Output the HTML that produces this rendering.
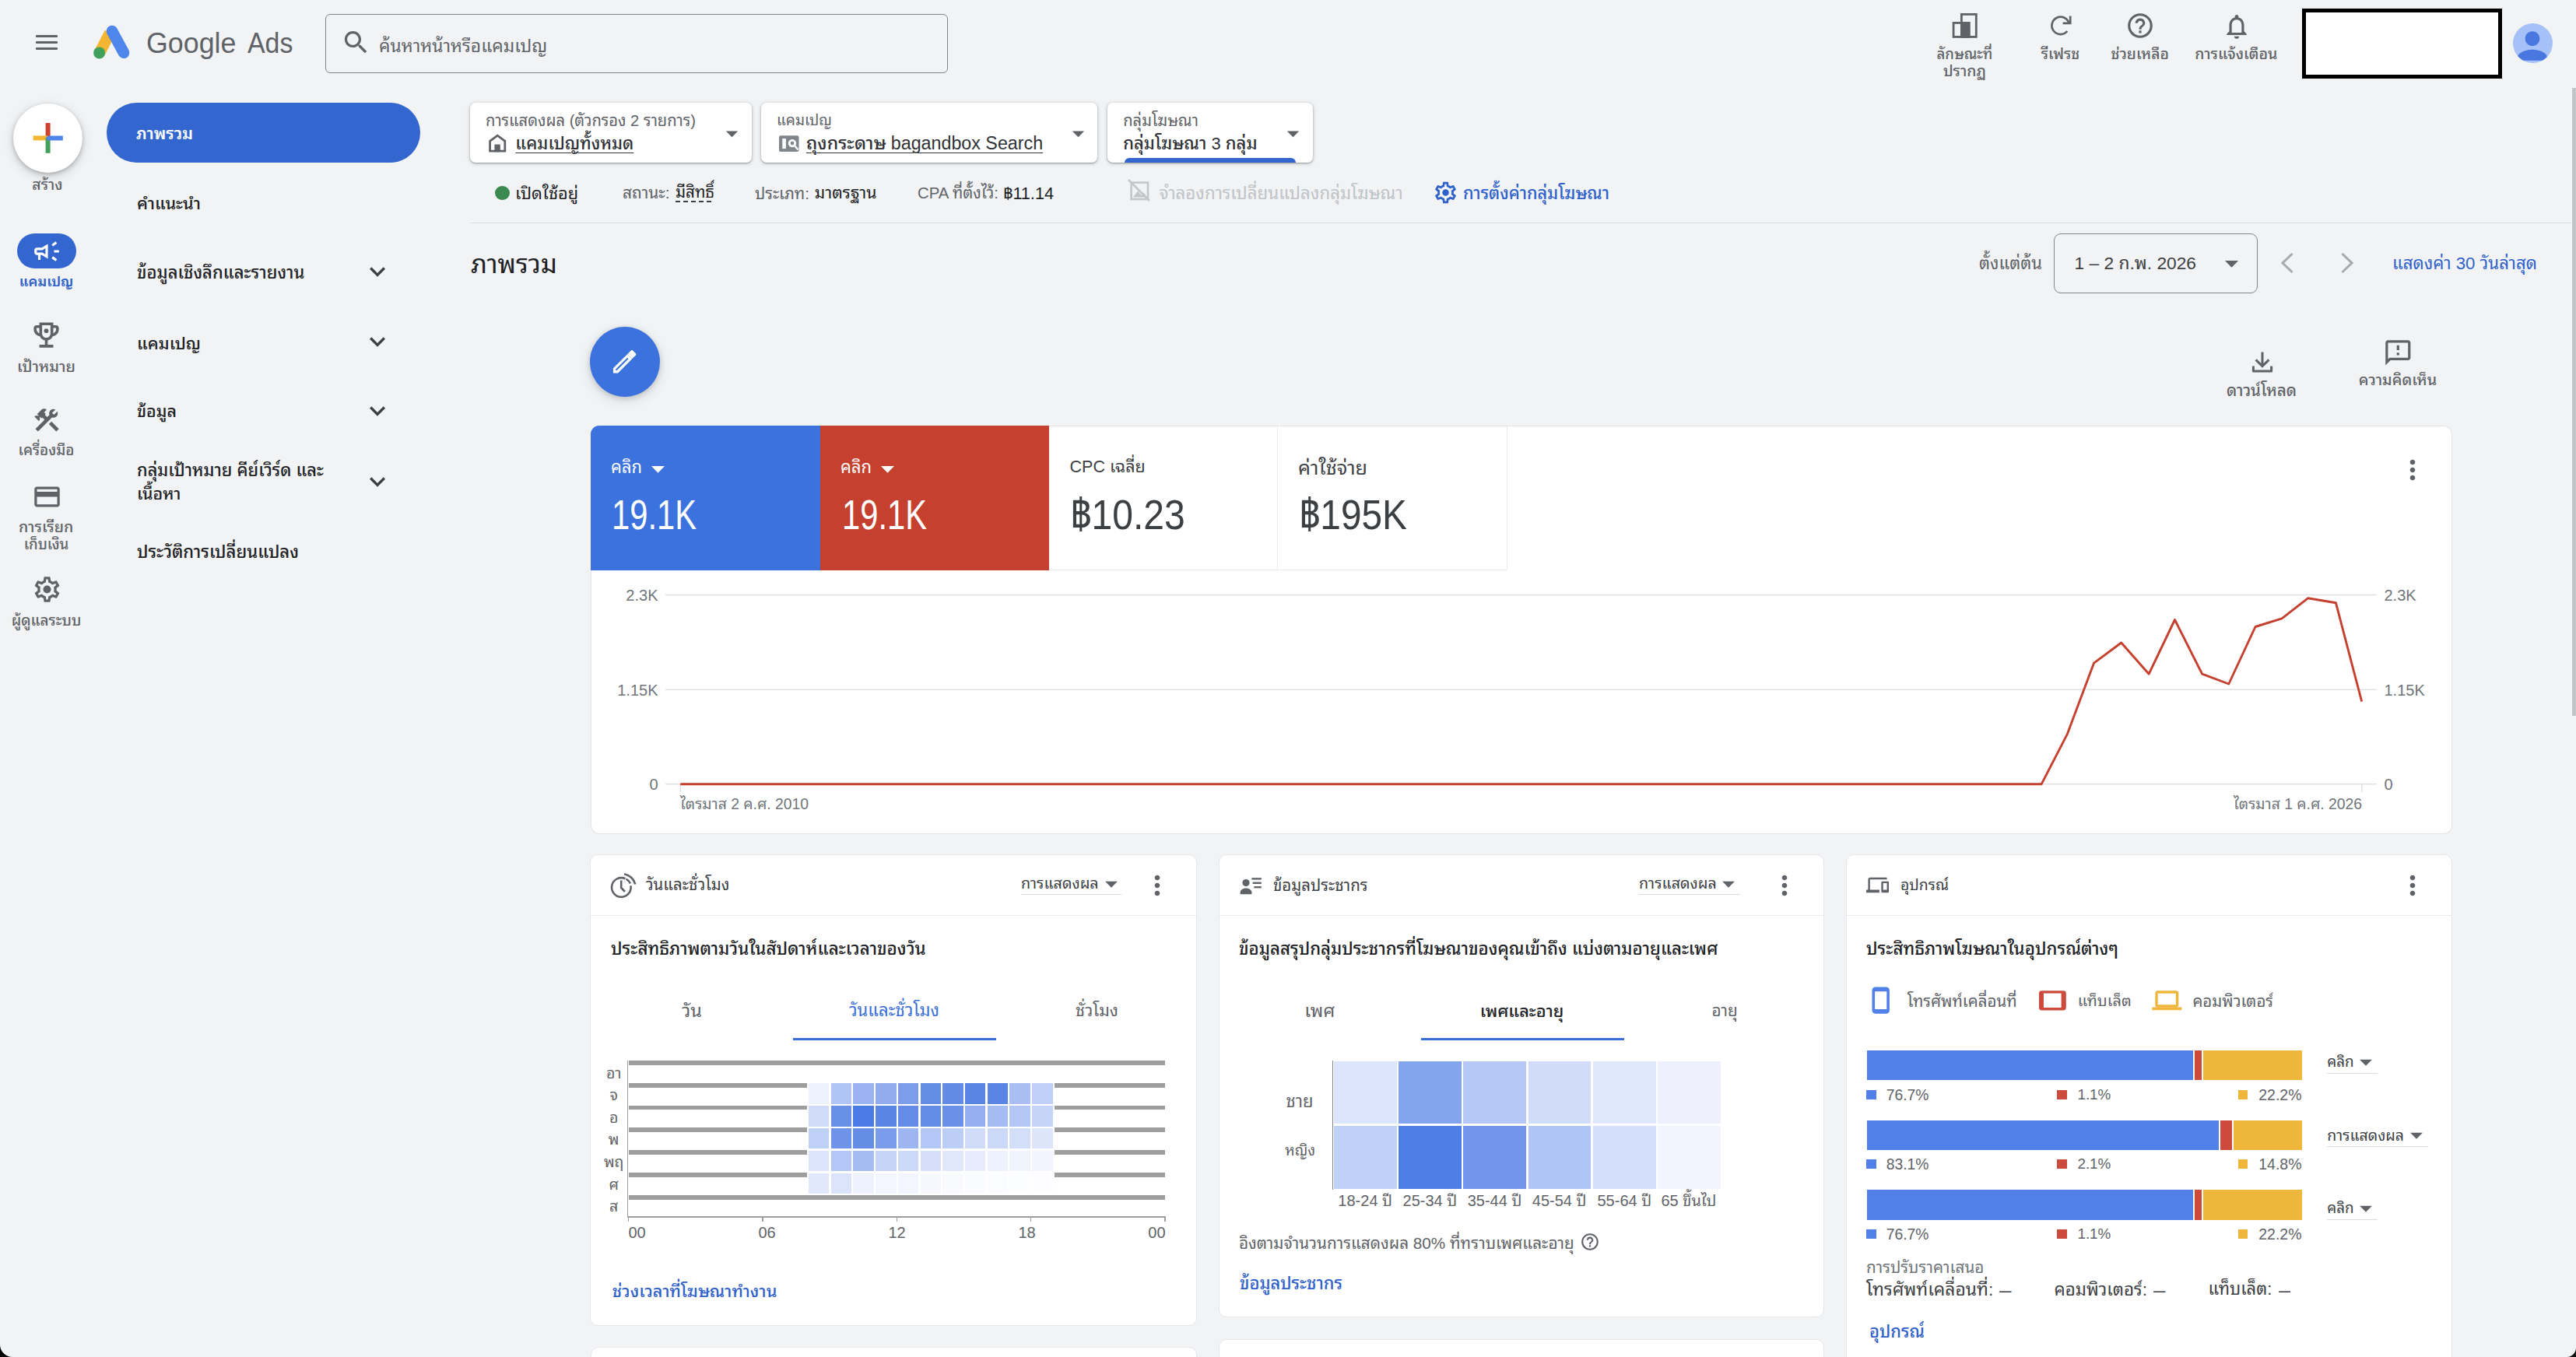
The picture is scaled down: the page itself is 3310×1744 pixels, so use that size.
<!DOCTYPE html>
<html lang="th"><head><meta charset="utf-8"><title>Google Ads</title>
<style>
html,body{margin:0;padding:0;background:#f1f3f5;}
#app{position:relative;width:3310px;height:1744px;overflow:hidden;background:#f1f3f5;font-family:"Liberation Sans","Noto Sans Thai Looped","Noto Sans Thai",sans-serif;}
#app div,#app svg{position:absolute;box-sizing:border-box;}
#app svg{overflow:visible;}
.t{white-space:nowrap;}
.c{background:#fff;border:1px solid #e5e7ea;border-radius:10px;}
.fc{background:#fff;border-radius:7px;box-shadow:0 1px 2px rgba(60,64,67,.4),0 1px 4px 1px rgba(60,64,67,.17);}
</style></head>
<body>
<div id="app">
<div style="left:45.7px;top:45.05px;width:28.4px;height:3.1px;background:#5f6368;border-radius:1px;"></div>
<div style="left:45.7px;top:52.95px;width:28.4px;height:3.1px;background:#5f6368;border-radius:1px;"></div>
<div style="left:45.7px;top:61.05px;width:28.4px;height:3.1px;background:#5f6368;border-radius:1px;"></div>
<svg style="left:115px;top:28px;" width="56" height="52" viewBox="115 28 56 52"><line x1="141.3" y1="42" x2="128" y2="67.8" stroke="#f2b632" stroke-width="14.6" stroke-linecap="butt"/><circle cx="127.6" cy="67.9" r="7.5" fill="#41a05b"/><line x1="144" y1="40" x2="159" y2="67.8" stroke="#4f86ec" stroke-width="14.6" stroke-linecap="round"/></svg>
<div class="t" style="top:19.30px;height:74px;line-height:74px;font-size:37px;color:#5f6368;left:188.2px;transform:scaleX(0.968);transform-origin:0 50%;"><span id="t1">Google</span></div>
<div class="t" style="top:19.30px;height:74px;line-height:74px;font-size:37px;color:#5f6368;left:318px;transform:scaleX(0.9159);transform-origin:0 50%;"><span id="t2">Ads</span></div>
<div style="left:418px;top:17.5px;width:800px;height:76px;border:1.5px solid #80868b;border-radius:6px;"></div>
<svg style="left:437.5px;top:34.5px;" width="39" height="39" viewBox="0 0 24 24"><path d="M15.5 14h-.79l-.28-.27C15.41 12.59 16 11.11 16 9.5 16 5.91 13.09 3 9.5 3S3 5.91 3 9.5 5.91 16 9.5 16c1.61 0 3.09-.59 4.23-1.57l.27.28v.79l5 4.99L20.49 19l-4.99-5zm-6 0C7.01 14 5 11.99 5 9.5S7.01 5 9.5 5 14 7.01 14 9.5 11.99 14 9.5 14z" fill="#5f6368"/></svg>
<div class="t" style="top:36.23px;height:46px;line-height:46px;font-size:22.77px;color:#5f6368;left:487px;"><span id="t3">ค้นหาหน้าหรือแคมเปญ</span></div>
<svg style="left:2508px;top:16px;" width="34" height="34" viewBox="2508 16 34 34"><rect x="2520.4" y="18.4" width="18.9" height="29" fill="none" stroke="#5f6368" stroke-width="2.8"/><rect x="2510.1" y="29.4" width="20" height="18" fill="none" stroke="#5f6368" stroke-width="2.8"/><rect x="2519" y="28" width="12.5" height="20" fill="#5f6368"/></svg>
<div class="t" style="top:51.28px;height:37px;line-height:37px;font-size:18.61px;color:#5f6368;font-weight:500;left:1924.4px;width:1200px;text-align:center;"><span id="t4">ลักษณะที่</span></div>
<div class="t" style="top:72.47px;height:39px;line-height:39px;font-size:19.49px;color:#5f6368;font-weight:500;left:1924.4px;width:1200px;text-align:center;"><span id="t5">ปรากฏ</span></div>
<svg style="left:2630px;top:15px;" width="36" height="36" viewBox="2630 15 36 36"><path d="M2658.6 30.3A11.2 11.2 0 1 0 2656.3 40" fill="none" stroke="#5f6368" stroke-width="2.7"/><path d="M2650.6 29.9H2660.2V20.4" fill="none" stroke="#5f6368" stroke-width="2.7" stroke-linejoin="miter"/></svg>
<div class="t" style="top:50.27px;height:39px;line-height:39px;font-size:19.3px;color:#5f6368;font-weight:500;left:2047.5px;width:1200px;text-align:center;"><span id="t6">รีเฟรช</span></div>
<svg style="left:2730.8px;top:13.8px;" width="38" height="38" viewBox="0 0 24 24"><path d="M11 18h2v-2h-2v2zm1-16C6.48 2 2 6.48 2 12s4.48 10 10 10 10-4.48 10-10S17.52 2 12 2zm0 18c-4.41 0-8-3.59-8-8s3.59-8 8-8 8 3.59 8 8-3.59 8-8 8zm0-14c-2.21 0-4 1.79-4 4h2c0-1.1.9-2 2-2s2 .9 2 2c0 2-3 1.75-3 5h2c0-2.25 3-2.5 3-5 0-2.21-1.79-4-4-4z" fill="#5f6368"/></svg>
<div class="t" style="top:50.27px;height:39px;line-height:39px;font-size:19.38px;color:#5f6368;font-weight:500;left:2149.7px;width:1200px;text-align:center;"><span id="t7">ช่วยเหลือ</span></div>
<svg style="left:2855px;top:14.5px;" width="38" height="38" viewBox="0 0 24 24"><path d="M12 22c1.1 0 2-.9 2-2h-4c0 1.1.9 2 2 2zm6-6v-5c0-3.07-1.63-5.64-4.5-6.32V4c0-.83-.67-1.5-1.5-1.5s-1.5.67-1.5 1.5v.68C7.64 5.36 6 7.92 6 11v5l-2 2v1h16v-1l-2-2zm-2 1H8v-6c0-2.48 1.51-4.5 4-4.5s4 2.02 4 4.5v6z" fill="#5f6368"/></svg>
<div class="t" style="top:50.27px;height:39px;line-height:39px;font-size:19.5px;color:#5f6368;font-weight:500;left:2273.3px;width:1200px;text-align:center;"><span id="t8">การแจ้งเตือน</span></div>
<div style="left:2957.5px;top:11.3px;width:257px;height:90px;background:#fff;border:5px solid #000;"></div>
<div style="left:3228.5px;top:30px;width:51px;height:51px;border-radius:50%;background:#a5c1f8;overflow:hidden;"><svg style="left:-2.5px;top:0.8px" width="56" height="56" viewBox="0 0 24 24"><path d="M12 12c2.21 0 4-1.79 4-4s-1.79-4-4-4-4 1.79-4 4 1.79 4 4 4zm0 2c-2.67 0-8 1.34-8 4v2h16v-2c0-2.66-5.33-4-8-4z" fill="#4a76df"/></svg></div>
<div style="left:3304.5px;top:113px;width:5.5px;height:807px;background:#c2c4c6;"></div>
<div style="left:17px;top:132.5px;width:89px;height:89px;border-radius:50%;background:#fff;box-shadow:0 2px 5px rgba(60,64,67,.3),0 4px 12px 2px rgba(60,64,67,.15);"></div>
<svg style="left:42px;top:157px;" width="40" height="41" viewBox="42 157 40 41"><rect x="58.6" y="158" width="6" height="19.4" fill="#d0402f"/><rect x="42.6" y="174.4" width="19" height="6" fill="#f2b632"/><rect x="58.6" y="177.4" width="6" height="19.4" fill="#41a05b"/><polygon points="58.6,177.4 61.6,174.4 80.8,174.4 80.8,180.4 61.6,180.4" fill="#4f86ec"/></svg>
<div class="t" style="top:218.27px;height:39px;line-height:39px;font-size:19.44px;color:#5f6368;font-weight:500;left:-539px;width:1200px;text-align:center;"><span id="t9">สร้าง</span></div>
<div style="left:22px;top:300px;width:76px;height:45px;border-radius:23px;background:#3366ce;"></div>
<svg style="left:41px;top:303.5px;" width="38" height="38" viewBox="0 0 24 24"><path d="M18 11v2h4v-2h-4zm-2 6.61c.96.71 2.21 1.65 3.2 2.39.4-.53.8-1.07 1.2-1.6-.99-.74-2.24-1.68-3.2-2.4-.4.54-.8 1.08-1.2 1.61zM20.4 5.6c-.4-.53-.8-1.07-1.2-1.6-.99.74-2.24 1.68-3.2 2.4.4.53.8 1.07 1.2 1.6.96-.72 2.21-1.65 3.2-2.4zM4 9c-1.1 0-2 .9-2 2v2c0 1.1.9 2 2 2h1v4h2v-4h1l5 3V6L8 9H4zm5.03 1.71L11 9.53v4.94l-1.97-1.18-.48-.29H4v-2h4.55l.48-.29z" fill="#fff"/></svg>
<div class="t" style="top:343.78px;height:36px;line-height:36px;font-size:18.06px;color:#2f5fc9;font-weight:600;left:-540.4px;width:1200px;text-align:center;"><span id="t10">แคมเปญ</span></div>
<svg style="left:38.3px;top:409.2px;" width="43" height="43" viewBox="0 0 24 24"><path d="M19 5h-2V3H7v2H5c-1.1 0-2 .9-2 2v1c0 2.55 1.92 4.63 4.39 4.94.63 1.5 1.98 2.63 3.61 2.96V19H7v2h10v-2h-4v-3.1c1.63-.33 2.98-1.46 3.61-2.96C19.08 12.63 21 10.55 21 8V7c0-1.1-.9-2-2-2zM5 8V7h2v3.82C5.84 10.4 5 9.3 5 8zm7 6c-1.65 0-3-1.35-3-3V5h6v6c0 1.65-1.35 3-3 3zm7-6c0 1.3-.84 2.4-2 2.82V7h2v1z" fill="#5f6368"/><circle cx="12" cy="9" r="1.6" fill="#5f6368"/></svg>
<div class="t" style="top:450.76px;height:40px;line-height:40px;font-size:19.93px;color:#5f6368;font-weight:500;left:-540.5px;width:1200px;text-align:center;"><span id="t11">เป้าหมาย</span></div>
<svg style="left:41px;top:520.5px;" width="38" height="38" viewBox="0 0 24 24"><path d="M13.783 15.172l2.121-2.121 5.996 5.996-2.121 2.121zM17.5 10c1.93 0 3.5-1.57 3.5-3.5 0-.58-.16-1.12-.41-1.6l-2.7 2.7-1.49-1.49 2.7-2.7c-.48-.25-1.02-.41-1.6-.41C15.57 3 14 4.57 14 6.5c0 .41.08.8.21 1.16l-1.85 1.85-1.78-1.78.71-.71-1.41-1.41L12 3.49c-1.17-1.17-3.07-1.17-4.24 0L4.22 7.03l1.41 1.41H2.81l-.71.71 3.54 3.54.71-.71V9.15l1.41 1.41.71-.71 1.78 1.78-7.41 7.41 2.12 2.12L16.34 9.79c.36.13.75.21 1.16.21z" fill="#5f6368"/></svg>
<div class="t" style="top:560.27px;height:38px;line-height:38px;font-size:18.82px;color:#5f6368;font-weight:500;left:-540.5px;width:1200px;text-align:center;"><span id="t12">เครื่องมือ</span></div>
<svg style="left:40.5px;top:618.5px;" width="39" height="39" viewBox="0 0 24 24"><path d="M20 4H4c-1.11 0-1.99.89-1.99 2L2 18c0 1.11.89 2 2 2h16c1.11 0 2-.89 2-2V6c0-1.11-.89-2-2-2zm0 14H4v-6h16v6zm0-10H4V6h16v2z" fill="#5f6368"/></svg>
<div class="t" style="top:658.26px;height:39px;line-height:39px;font-size:19.66px;color:#5f6368;font-weight:500;left:-540.8px;width:1200px;text-align:center;"><span id="t13">การเรียก</span></div>
<div class="t" style="top:680.78px;height:37px;line-height:37px;font-size:18.6px;color:#5f6368;font-weight:500;left:-540.5px;width:1200px;text-align:center;"><span id="t14">เก็บเงิน</span></div>
<svg style="left:40.5px;top:738px;" width="39" height="39" viewBox="0 0 24 24"><path d="M19.43 12.98c.04-.32.07-.64.07-.98 0-.34-.03-.66-.07-.98l2.11-1.65c.19-.15.24-.42.12-.64l-2-3.46c-.09-.16-.26-.25-.44-.25-.06 0-.12.01-.17.03l-2.49 1c-.52-.4-1.08-.73-1.69-.98l-.38-2.65C14.46 2.18 14.25 2 14 2h-4c-.25 0-.46.18-.49.42l-.38 2.65c-.61.25-1.17.59-1.69.98l-2.49-1c-.06-.02-.12-.03-.18-.03-.17 0-.34.09-.43.25l-2 3.46c-.13.22-.07.49.12.64l2.11 1.65c-.04.32-.07.65-.07.98 0 .33.03.66.07.98l-2.11 1.65c-.19.15-.24.42-.12.64l2 3.46c.09.16.26.25.44.25.06 0 .12-.01.17-.03l2.49-1c.52.4 1.08.73 1.69.98l.38 2.65c.03.24.24.42.49.42h4c.25 0 .46-.18.49-.42l.38-2.65c.61-.25 1.17-.59 1.69-.98l2.49 1c.06.02.12.03.18.03.17 0 .34-.09.43-.25l2-3.46c.12-.22.07-.49-.12-.64l-2.11-1.65zm-1.98-1.71c.04.31.05.52.05.73 0 .21-.02.43-.05.73l-.14 1.13.89.7 1.08.84-.7 1.21-1.27-.51-1.04-.42-.9.68c-.43.32-.84.56-1.25.73l-1.06.43-.16 1.13-.2 1.35h-1.4l-.19-1.35-.16-1.13-1.06-.43c-.43-.18-.83-.41-1.23-.71l-.91-.7-1.06.43-1.27.51-.7-1.21 1.08-.84.89-.7-.14-1.13c-.03-.31-.05-.54-.05-.74s.02-.43.05-.73l.14-1.13-.89-.7-1.08-.84.7-1.21 1.27.51 1.04.42.9-.68c.43-.32.84-.56 1.25-.73l1.06-.43.16-1.13.2-1.35h1.39l.19 1.35.16 1.13 1.06.43c.43.18.83.41 1.23.71l.91.7 1.06-.43 1.27-.51.7 1.21-1.07.85-.89.7.14 1.13z" fill="#5f6368"/><circle cx="12" cy="12" r="3.1" fill="#5f6368"/></svg>
<div class="t" style="top:778.77px;height:38px;line-height:38px;font-size:18.99px;color:#5f6368;font-weight:500;left:-540.5px;width:1200px;text-align:center;"><span id="t15">ผู้ดูแลระบบ</span></div>
<div style="left:137px;top:132px;width:403px;height:77px;border-radius:39px;background:#3366ce;"></div>
<div class="t" style="top:151.24px;height:43px;line-height:43px;font-size:21.32px;color:#fff;font-weight:600;left:175px;"><span id="t16">ภาพรวม</span></div>
<div class="t" style="top:240.24px;height:43px;line-height:43px;font-size:21.68px;color:#202124;font-weight:500;left:176px;"><span id="t17">คำแนะนำ</span></div>
<div class="t" style="top:328.74px;height:44px;line-height:44px;font-size:22.01px;color:#202124;font-weight:500;left:176px;"><span id="t18">ข้อมูลเชิงลึกและรายงาน</span></div>
<div class="t" style="top:419.74px;height:43px;line-height:43px;font-size:21.66px;color:#202124;font-weight:500;left:176px;"><span id="t19">แคมเปญ</span></div>
<div class="t" style="top:508.24px;height:43px;line-height:43px;font-size:21.39px;color:#202124;font-weight:500;left:176px;"><span id="t20">ข้อมูล</span></div>
<div class="t" style="top:582.54px;height:44px;line-height:44px;font-size:21.8px;color:#202124;font-weight:500;left:176px;"><span id="t21">กลุ่มเป้าหมาย คีย์เวิร์ด และ</span></div>
<div class="t" style="top:613.74px;height:43px;line-height:43px;font-size:21.35px;color:#202124;font-weight:500;left:176px;"><span id="t22">เนื้อหา</span></div>
<div class="t" style="top:687.73px;height:44px;line-height:44px;font-size:22.13px;color:#202124;font-weight:500;left:176px;"><span id="t23">ประวัติการเปลี่ยนแปลง</span></div>
<svg style="left:465px;top:329.3px;" width="40" height="40" viewBox="0 0 24 24"><path d="M16.59 8.59L12 13.17 7.41 8.59 6 10l6 6 6-6z" fill="#3c4043"/></svg>
<svg style="left:465px;top:419.1px;" width="40" height="40" viewBox="0 0 24 24"><path d="M16.59 8.59L12 13.17 7.41 8.59 6 10l6 6 6-6z" fill="#3c4043"/></svg>
<svg style="left:465px;top:507.9px;" width="40" height="40" viewBox="0 0 24 24"><path d="M16.59 8.59L12 13.17 7.41 8.59 6 10l6 6 6-6z" fill="#3c4043"/></svg>
<svg style="left:465px;top:598.5px;" width="40" height="40" viewBox="0 0 24 24"><path d="M16.59 8.59L12 13.17 7.41 8.59 6 10l6 6 6-6z" fill="#3c4043"/></svg>
<div class="fc" style="left:604px;top:132px;width:362px;height:77px;"></div>
<div class="fc" style="left:978px;top:132px;width:432px;height:77px;"></div>
<div class="fc" style="left:1422.5px;top:132px;width:264.5px;height:77px;overflow:hidden;"><div style="left:22.5px;top:71px;width:220px;height:12px;border-radius:6px;background:#3366ce;"></div></div>
<div class="t" style="top:135.16px;height:40px;line-height:40px;font-size:20.14px;color:#5f6368;left:624px;"><span id="t24">การแสดงผล (ตัวกรอง 2 รายการ)</span></div>
<svg style="left:627px;top:171px;" width="25" height="26" viewBox="627 171 25 26"><path d="M629.6 194.2V181.3L639.2 174.2L648.8 181.3V194.2Z" fill="none" stroke="#5f6368" stroke-width="2.8" stroke-linejoin="miter"/><rect x="635.4" y="185.6" width="7.4" height="9.6" fill="#5f6368"/></svg>
<div class="t" style="top:162.74px;height:44px;line-height:44px;font-size:21.91px;color:#303236;font-weight:500;left:662.3px;"><span id="t25" style="text-decoration:underline;text-decoration-thickness:1.4px;text-underline-offset:3.5px;">แคมเปญทั้งหมด</span></div>
<svg style="left:921.5px;top:153px;" width="37" height="37" viewBox="0 0 24 24"><path d="M7 10l5 5 5-5z" fill="#5f6368"/></svg>
<div class="t" style="top:136.17px;height:38px;line-height:38px;font-size:19.05px;color:#5f6368;left:998px;"><span id="t26">แคมเปญ</span></div>
<svg style="left:1001px;top:173.5px;" width="27" height="22" viewBox="1001 173.5 27 22"><rect x="1001" y="173.8" width="25.5" height="20.6" rx="2" fill="#80868b"/><rect x="1005.3" y="177.6" width="4.6" height="13" fill="#fff"/><circle cx="1018" cy="183.6" r="5.2" fill="#fff"/><circle cx="1018" cy="183.6" r="2.3" fill="#80868b"/><line x1="1021.5" y1="187.4" x2="1025.6" y2="192" stroke="#fff" stroke-width="2.4"/></svg>
<div class="t" style="top:161.22px;height:47px;line-height:47px;font-size:23.27px;color:#303236;font-weight:500;left:1036px;"><span id="t27" style="text-decoration:underline;text-decoration-thickness:1.4px;text-underline-offset:3.5px;">ถุงกระดาษ bagandbox Search</span></div>
<svg style="left:1366.5px;top:153px;" width="37" height="37" viewBox="0 0 24 24"><path d="M7 10l5 5 5-5z" fill="#5f6368"/></svg>
<div class="t" style="top:135.16px;height:40px;line-height:40px;font-size:20.15px;color:#5f6368;left:1443.2px;"><span id="t28">กลุ่มโฆษณา</span></div>
<div class="t" style="top:162.74px;height:44px;line-height:44px;font-size:22.02px;color:#303236;font-weight:500;left:1443.2px;"><span id="t29">กลุ่มโฆษณา 3 กลุ่ม</span></div>
<svg style="left:1643px;top:153px;" width="37" height="37" viewBox="0 0 24 24"><path d="M7 10l5 5 5-5z" fill="#5f6368"/></svg>
<div style="left:636px;top:238.7px;width:18.6px;height:18.6px;border-radius:50%;background:#3a8a50;"></div>
<div class="t" style="top:226.64px;height:43px;line-height:43px;font-size:21.74px;color:#202124;left:662px;"><span id="t30">เปิดใช้อยู่</span></div>
<div class="t" style="top:227.15px;height:42px;line-height:42px;font-size:20.93px;color:#5f6368;left:800px;"><span id="t31">สถานะ:</span></div>
<div class="t" style="top:226.05px;height:41px;line-height:41px;font-size:20.59px;color:#202124;left:868px;"><span id="t32">มีสิทธิ์</span></div>
<div style="left:868px;top:258px;width:50px;height:2px;background:repeating-linear-gradient(90deg,#3c4043 0 6px,transparent 6px 10px);"></div>
<div class="t" style="top:227.65px;height:41px;line-height:41px;font-size:20.55px;color:#5f6368;left:970px;"><span id="t33">ประเภท:</span></div>
<div class="t" style="top:227.15px;height:42px;line-height:42px;font-size:21.21px;color:#202124;left:1046.8px;"><span id="t34">มาตรฐาน</span></div>
<div class="t" style="top:227.66px;height:41px;line-height:41px;font-size:20.36px;color:#5f6368;left:1179px;"><span id="t35">CPA ที่ตั้งไว้:</span></div>
<div class="t" style="top:226.90px;height:43px;line-height:43px;font-size:21.67px;color:#202124;left:1289px;"><span id="t36">฿11.14</span></div>
<svg style="left:1448px;top:229px;" width="31" height="31" viewBox="1448 229 31 31"><rect x="1453.6" y="234.6" width="21.4" height="21.4" fill="none" stroke="#c4c7ca" stroke-width="2.6"/><path d="M1456 253.5l6-8 4.5 5.5 3-3.5 4.5 6z" fill="#c4c7ca"/><line x1="1450" y1="231" x2="1477" y2="258" stroke="#c4c7ca" stroke-width="2.6"/></svg>
<div class="t" style="top:226.23px;height:45px;line-height:45px;font-size:22.3px;color:#bfc3c7;left:1489.4px;"><span id="t37">จำลองการเปลี่ยนแปลงกลุ่มโฆษณา</span></div>
<svg style="left:1841px;top:231.3px;" width="33" height="33" viewBox="0 0 24 24"><path d="M19.43 12.98c.04-.32.07-.64.07-.98 0-.34-.03-.66-.07-.98l2.11-1.65c.19-.15.24-.42.12-.64l-2-3.46c-.09-.16-.26-.25-.44-.25-.06 0-.12.01-.17.03l-2.49 1c-.52-.4-1.08-.73-1.69-.98l-.38-2.65C14.46 2.18 14.25 2 14 2h-4c-.25 0-.46.18-.49.42l-.38 2.65c-.61.25-1.17.59-1.69.98l-2.49-1c-.06-.02-.12-.03-.18-.03-.17 0-.34.09-.43.25l-2 3.46c-.13.22-.07.49.12.64l2.11 1.65c-.04.32-.07.65-.07.98 0 .33.03.66.07.98l-2.11 1.65c-.19.15-.24.42-.12.64l2 3.46c.09.16.26.25.44.25.06 0 .12-.01.17-.03l2.49-1c.52.4 1.08.73 1.69.98l.38 2.65c.03.24.24.42.49.42h4c.25 0 .46-.18.49-.42l.38-2.65c.61-.25 1.17-.59 1.69-.98l2.49 1c.06.02.12.03.18.03.17 0 .34-.09.43-.25l2-3.46c.12-.22.07-.49-.12-.64l-2.11-1.65zm-1.98-1.71c.04.31.05.52.05.73 0 .21-.02.43-.05.73l-.14 1.13.89.7 1.08.84-.7 1.21-1.27-.51-1.04-.42-.9.68c-.43.32-.84.56-1.25.73l-1.06.43-.16 1.13-.2 1.35h-1.4l-.19-1.35-.16-1.13-1.06-.43c-.43-.18-.83-.41-1.23-.71l-.91-.7-1.06.43-1.27.51-.7-1.21 1.08-.84.89-.7-.14-1.13c-.03-.31-.05-.54-.05-.74s.02-.43.05-.73l.14-1.13-.89-.7-1.08-.84.7-1.21 1.27.51 1.04.42.9-.68c.43-.32.84-.56 1.25-.73l1.06-.43.16-1.13.2-1.35h1.39l.19 1.35.16 1.13 1.06.43c.43.18.83.41 1.23.71l.91.7 1.06-.43 1.27-.51.7 1.21-1.07.85-.89.7.14 1.13z" fill="#2f61cb"/><circle cx="12" cy="12" r="3.1" fill="#2f61cb"/></svg>
<div class="t" style="top:226.74px;height:44px;line-height:44px;font-size:21.8px;color:#2f61cb;font-weight:500;left:1880px;"><span id="t38">การตั้งค่ากลุ่มโฆษณา</span></div>
<div style="left:604px;top:285.5px;width:2700px;height:1.5px;background:#dcdee1;"></div>
<div class="t" style="top:306.10px;height:67px;line-height:67px;font-size:33.38px;color:#202124;left:605px;"><span id="t39">ภาพรวม</span></div>
<div class="t" style="top:316.74px;height:44px;line-height:44px;font-size:22px;color:#5f6368;left:2543px;"><span id="t40">ตั้งแต่ต้น</span></div>
<div style="left:2639px;top:300.4px;width:261.5px;height:77px;border:1.5px solid #80868b;border-radius:9px;"></div>
<div class="t" style="top:316.23px;height:45px;line-height:45px;font-size:22.74px;color:#3c4043;left:2665.6px;"><span id="t41">1 – 2 ก.พ. 2026</span></div>
<svg style="left:2847px;top:318px;" width="41" height="41" viewBox="0 0 24 24"><path d="M7 10l5 5 5-5z" fill="#5f6368"/></svg>
<svg style="left:2928px;top:322px;" width="22" height="32" viewBox="2928 322 22 32"><path d="M2945.5 326L2933 338L2945.5 350" fill="none" stroke="#a6aaae" stroke-width="3"/></svg>
<svg style="left:3005px;top:322px;" width="22" height="32" viewBox="3005 322 22 32"><path d="M3009.5 326L3022 338L3009.5 350" fill="none" stroke="#a6aaae" stroke-width="3"/></svg>
<div class="t" style="top:316.73px;height:44px;line-height:44px;font-size:22.23px;color:#2f61cb;left:3074px;"><span id="t42">แสดงค่า 30 วันล่าสุด</span></div>
<div style="left:758px;top:420px;width:90px;height:90px;border-radius:50%;background:#3b72de;box-shadow:0 2px 6px rgba(60,64,67,.22),0 5px 14px 2px rgba(60,64,67,.1);"></div>
<svg style="left:783px;top:445.2px;" width="39.3" height="39.3" viewBox="0 0 24 24"><path d="M14.06 9.02l.92.92L5.92 19H5v-.92l9.06-9.06M17.66 3c-.25 0-.51.1-.7.29l-1.83 1.83 3.75 3.75 1.83-1.83c.39-.39.39-1.02 0-1.41l-2.34-2.34c-.2-.2-.45-.29-.71-.29zm-3.6 3.19L3 17.25V21h3.75L17.81 9.94l-3.75-3.75z" fill="#fff"/><path d="M14.06 6.19l1.07-1.07 3.75 3.75-1.07 1.07z" fill="#fff"/></svg>
<svg style="left:2892px;top:450px;" width="30" height="30" viewBox="2892 450 30 30"><path d="M2907 452.6V470M2898.6 462.4L2907 470.6L2915.4 462.4" fill="none" stroke="#5f6368" stroke-width="3"/><path d="M2895.4 470.5V477h23.2V470.5" fill="none" stroke="#5f6368" stroke-width="3" stroke-linejoin="round"/></svg>
<div class="t" style="top:481.66px;height:41px;line-height:41px;font-size:20.39px;color:#5f6368;font-weight:500;left:2306px;width:1200px;text-align:center;"><span id="t43">ดาวน์โหลด</span></div>
<svg style="left:3061.6px;top:433.7px;" width="38.6" height="38.6" viewBox="0 0 24 24"><path d="M20 2H4c-1.1 0-1.99.9-1.99 2L2 22l4-4h14c1.1 0 2-.9 2-2V4c0-1.1-.9-2-2-2zm0 14H5.17l-.59.59-.58.58V4h16v12zm-9-4h2v2h-2zm0-6h2v4h-2z" fill="#5f6368"/></svg>
<div class="t" style="top:469.26px;height:39px;line-height:39px;font-size:19.71px;color:#5f6368;font-weight:500;left:2481px;width:1200px;text-align:center;"><span id="t44">ความคิดเห็น</span></div>
<div style="left:758.6px;top:546.7px;width:2392.6px;height:525.8px;overflow:hidden;background:#fff;border-radius:11px;box-shadow:inset 0 0 0 1px #e2e4e7;"><div style="left:0;top:0;width:295px;height:186px;background:#3b72de;"></div><div style="left:295px;top:0;width:294.4px;height:186px;background:#c5402f;"></div><div style="left:589.4px;top:0;width:589px;height:186.8px;border-bottom:1.5px solid #e8eaed;border-right:1.5px solid #e8eaed;"></div><div style="left:882.3px;top:0;width:1.5px;height:186px;background:#e8eaed;"></div></div>
<div class="t" style="top:578.74px;height:44px;line-height:44px;font-size:21.92px;color:#fff;left:785px;"><span id="t45">คลิก</span></div>
<svg style="left:825px;top:582px;" width="41" height="41" viewBox="0 0 24 24"><path d="M7 10l5 5 5-5z" fill="#fff"/></svg>
<div class="t" style="top:606.80px;height:108px;line-height:108px;font-size:54px;color:#fff;left:786px;transform:scaleX(0.7724);transform-origin:0 50%;"><span id="t46">19.1K</span></div>
<div class="t" style="top:578.74px;height:44px;line-height:44px;font-size:21.92px;color:#fff;left:1080px;"><span id="t47">คลิก</span></div>
<svg style="left:1120px;top:582px;" width="41" height="41" viewBox="0 0 24 24"><path d="M7 10l5 5 5-5z" fill="#fff"/></svg>
<div class="t" style="top:606.80px;height:108px;line-height:108px;font-size:54px;color:#fff;left:1081.5px;transform:scaleX(0.7724);transform-origin:0 50%;"><span id="t48">19.1K</span></div>
<div class="t" style="top:579.24px;height:43px;line-height:43px;font-size:21.49px;color:#3c4043;left:1374.6px;"><span id="t49">CPC เฉลี่ย</span></div>
<div class="t" style="top:606.80px;height:108px;line-height:108px;font-size:54px;color:#3c4043;left:1374.6px;transform:scaleX(0.8902);transform-origin:0 50%;"><span id="t50">฿10.23</span></div>
<div class="t" style="top:575.70px;height:50px;line-height:50px;font-size:25.18px;color:#3c4043;left:1668px;"><span id="t51">ค่าใช้จ่าย</span></div>
<div class="t" style="top:606.80px;height:108px;line-height:108px;font-size:54px;color:#3c4043;left:1669px;transform:scaleX(0.8853);transform-origin:0 50%;"><span id="t52">฿195K</span></div>
<svg style="left:3079.5px;top:583.5px;" width="40" height="40" viewBox="0 0 24 24"><path d="M12 8c1.1 0 2-.9 2-2s-.9-2-2-2-2 .9-2 2 .9 2 2 2zm0 2c-1.1 0-2 .9-2 2s.9 2 2 2 2-.9 2-2-.9-2-2-2zm0 6c-1.1 0-2 .9-2 2s.9 2 2 2 2-.9 2-2-.9-2-2-2z" fill="#5f6368"/></svg>
<svg style="left:0px;top:0px;pointer-events:none;" width="3310" height="1744" viewBox="0 0 3310 1744"><line x1="855" y1="764.5" x2="3054" y2="764.5" stroke="#dfe1e4" stroke-width="1.6"/><line x1="855" y1="886.3" x2="3054" y2="886.3" stroke="#dfe1e4" stroke-width="1.6"/><line x1="855" y1="1007.8" x2="3054" y2="1007.8" stroke="#dfe1e4" stroke-width="1.6"/><line x1="874.2" y1="1008" x2="874.2" y2="1018" stroke="#dfe1e4" stroke-width="1.5"/><line x1="3034.7" y1="1008" x2="3034.7" y2="1018" stroke="#dfe1e4" stroke-width="1.5"/><polyline points="874.2,1007.8 2623.1,1007.8 2656.5,943.1 2690.6,852.1 2725.7,826 2761.2,866.2 2794.5,796.5 2829.6,866.2 2863.8,879 2898,805.5 2932.1,794.8 2965.5,768.8 3001.4,774.7 3034.7,901.7" fill="none" stroke="#c5402f" stroke-width="2.9" stroke-linejoin="round"/></svg>
<div class="t" style="top:744.80px;height:40px;line-height:40px;font-size:20px;color:#70757a;left:-354.5px;width:1200px;text-align:right;"><span id="t53">2.3K</span></div>
<div class="t" style="top:744.80px;height:40px;line-height:40px;font-size:20px;color:#70757a;left:3063.5px;"><span id="t54">2.3K</span></div>
<div class="t" style="top:866.60px;height:40px;line-height:40px;font-size:20px;color:#70757a;left:-354.5px;width:1200px;text-align:right;"><span id="t55">1.15K</span></div>
<div class="t" style="top:866.60px;height:40px;line-height:40px;font-size:20px;color:#70757a;left:3063.5px;"><span id="t56">1.15K</span></div>
<div class="t" style="top:988.00px;height:40px;line-height:40px;font-size:20px;color:#70757a;left:-354.5px;width:1200px;text-align:right;"><span id="t57">0</span></div>
<div class="t" style="top:988.00px;height:40px;line-height:40px;font-size:20px;color:#70757a;left:3063.5px;"><span id="t58">0</span></div>
<div class="t" style="top:1013.77px;height:39px;line-height:39px;font-size:19.33px;color:#70757a;left:874px;"><span id="t59">ไตรมาส 2 ค.ศ. 2010</span></div>
<div class="t" style="top:1013.77px;height:39px;line-height:39px;font-size:19.33px;color:#70757a;left:1835px;width:1200px;text-align:right;"><span id="t60">ไตรมาส 1 ค.ศ. 2026</span></div>
<div class="c" style="left:758.2px;top:1098px;width:780.1px;height:605.6px;"><div style="left:0;top:76.5px;width:100%;height:1.5px;background:#e8eaed;"></div></div>
<div class="c" style="left:1565.5px;top:1098px;width:778px;height:595.3px;"><div style="left:0;top:76.5px;width:100%;height:1.5px;background:#e8eaed;"></div></div>
<div class="c" style="left:2372px;top:1098px;width:779px;height:700px;"><div style="left:0;top:76.5px;width:100%;height:1.5px;background:#e8eaed;"></div></div>
<div class="c" style="left:758.5px;top:1731px;width:779.8px;height:100px;"></div>
<div class="c" style="left:1566px;top:1721.3px;width:777.6px;height:100px;"></div>
<svg style="left:780px;top:1116px;" width="44" height="44" viewBox="780 1116 44 44"><path d="M803.5 1129.3A12.3 12.3 0 1 0 810.4 1138.2" fill="none" stroke="#5f6368" stroke-width="2.6"/><path d="M802 1123.2A18 18 0 0 1 816.3 1136.5" fill="none" stroke="#5f6368" stroke-width="2.6"/><path d="M804.5 1129.6A12.3 12.3 0 0 1 810 1135.5" fill="none" stroke="#5f6368" stroke-width="2.6"/><path d="M798.2 1131.5V1141L803 1146" fill="none" stroke="#5f6368" stroke-width="2.6"/></svg>
<div class="t" style="top:1117.25px;height:41px;line-height:41px;font-size:20.43px;color:#3c4043;left:829.8px;"><span id="t61">วันและชั่วโมง</span></div>
<div class="t" style="top:1116.26px;height:39px;line-height:39px;font-size:19.65px;color:#3c4043;left:1312px;"><span id="t62">การแสดงผล</span></div>
<svg style="left:1408.7px;top:1116.8px;" width="38" height="38" viewBox="0 0 24 24"><path d="M7 10l5 5 5-5z" fill="#5f6368"/></svg>
<div style="left:1312px;top:1148.5px;width:129px;height:1.4px;background:#dadce0;"></div>
<svg style="left:1466.5px;top:1118px;" width="40" height="40" viewBox="0 0 24 24"><path d="M12 8c1.1 0 2-.9 2-2s-.9-2-2-2-2 .9-2 2 .9 2 2 2zm0 2c-1.1 0-2 .9-2 2s.9 2 2 2 2-.9 2-2-.9-2-2-2zm0 6c-1.1 0-2 .9-2 2s.9 2 2 2 2-.9 2-2-.9-2-2-2z" fill="#5f6368"/></svg>
<div class="t" style="top:1197.23px;height:45px;line-height:45px;font-size:22.33px;color:#202124;font-weight:500;left:785px;"><span id="t63">ประสิทธิภาพตามวันในสัปดาห์และเวลาของวัน</span></div>
<div class="t" style="top:1275.82px;height:47px;line-height:47px;font-size:23.5px;color:#5f6368;left:289px;width:1200px;text-align:center;"><span id="t64">วัน</span></div>
<div class="t" style="top:1277.34px;height:44px;line-height:44px;font-size:22.02px;color:#3a6fd8;left:1091px;"><span id="t65">วันและชั่วโมง</span></div>
<div class="t" style="top:1277.84px;height:43px;line-height:43px;font-size:21.46px;color:#5f6368;left:1382px;"><span id="t66">ชั่วโมง</span></div>
<div style="left:1019px;top:1333.6px;width:260.5px;height:3.2px;background:#3a6fd8;"></div>
<div style="left:807.8px;top:1362.9px;width:689.2px;height:5.8px;background:#9e9e9e;"></div>
<div style="left:807.8px;top:1391.73px;width:689.2px;height:5.8px;background:#9e9e9e;"></div>
<div style="left:807.8px;top:1420.56px;width:689.2px;height:5.8px;background:#9e9e9e;"></div>
<div style="left:807.8px;top:1449.39px;width:689.2px;height:5.8px;background:#9e9e9e;"></div>
<div style="left:807.8px;top:1478.22px;width:689.2px;height:5.8px;background:#9e9e9e;"></div>
<div style="left:807.8px;top:1507.05px;width:689.2px;height:5.8px;background:#9e9e9e;"></div>
<div style="left:807.8px;top:1535.88px;width:689.2px;height:5.8px;background:#9e9e9e;"></div>
<div style="left:1037px;top:1391.13px;width:317.6px;height:144.15px;background:#fff;"></div>
<div style="left:1038.93px;top:1392.33px;width:26.52px;height:26.4px;background:#eef2fc;"></div>
<div style="left:1067.65px;top:1392.33px;width:26.52px;height:26.4px;background:#b0c4f5;"></div>
<div style="left:1096.37px;top:1392.33px;width:26.52px;height:26.4px;background:#9bb3f1;"></div>
<div style="left:1125.08px;top:1392.33px;width:26.52px;height:26.4px;background:#92abee;"></div>
<div style="left:1153.8px;top:1392.33px;width:26.52px;height:26.4px;background:#7d9dea;"></div>
<div style="left:1182.52px;top:1392.33px;width:26.52px;height:26.4px;background:#658de6;"></div>
<div style="left:1211.23px;top:1392.33px;width:26.52px;height:26.4px;background:#638be6;"></div>
<div style="left:1239.95px;top:1392.33px;width:26.52px;height:26.4px;background:#5a85e5;"></div>
<div style="left:1268.67px;top:1392.33px;width:26.52px;height:26.4px;background:#5a85e5;"></div>
<div style="left:1297.38px;top:1392.33px;width:26.52px;height:26.4px;background:#a9bff3;"></div>
<div style="left:1326.1px;top:1392.33px;width:26.52px;height:26.4px;background:#bfcff6;"></div>
<div style="left:1038.93px;top:1421.16px;width:26.52px;height:26.4px;background:#cfdbf8;"></div>
<div style="left:1067.65px;top:1421.16px;width:26.52px;height:26.4px;background:#6890e7;"></div>
<div style="left:1096.37px;top:1421.16px;width:26.52px;height:26.4px;background:#4a7ae4;"></div>
<div style="left:1125.08px;top:1421.16px;width:26.52px;height:26.4px;background:#5a85e5;"></div>
<div style="left:1153.8px;top:1421.16px;width:26.52px;height:26.4px;background:#648ce6;"></div>
<div style="left:1182.52px;top:1421.16px;width:26.52px;height:26.4px;background:#648ce6;"></div>
<div style="left:1211.23px;top:1421.16px;width:26.52px;height:26.4px;background:#6a90e7;"></div>
<div style="left:1239.95px;top:1421.16px;width:26.52px;height:26.4px;background:#94aef0;"></div>
<div style="left:1268.67px;top:1421.16px;width:26.52px;height:26.4px;background:#a5bcf3;"></div>
<div style="left:1297.38px;top:1421.16px;width:26.52px;height:26.4px;background:#b4c7f4;"></div>
<div style="left:1326.1px;top:1421.16px;width:26.52px;height:26.4px;background:#c6d4f7;"></div>
<div style="left:1038.93px;top:1449.99px;width:26.52px;height:26.4px;background:#bfd0f6;"></div>
<div style="left:1067.65px;top:1449.99px;width:26.52px;height:26.4px;background:#6e93e8;"></div>
<div style="left:1096.37px;top:1449.99px;width:26.52px;height:26.4px;background:#658de6;"></div>
<div style="left:1125.08px;top:1449.99px;width:26.52px;height:26.4px;background:#7a9cea;"></div>
<div style="left:1153.8px;top:1449.99px;width:26.52px;height:26.4px;background:#9db5f1;"></div>
<div style="left:1182.52px;top:1449.99px;width:26.52px;height:26.4px;background:#b3c6f5;"></div>
<div style="left:1211.23px;top:1449.99px;width:26.52px;height:26.4px;background:#bccdf6;"></div>
<div style="left:1239.95px;top:1449.99px;width:26.52px;height:26.4px;background:#d0dbf9;"></div>
<div style="left:1268.67px;top:1449.99px;width:26.52px;height:26.4px;background:#cbd8f8;"></div>
<div style="left:1297.38px;top:1449.99px;width:26.52px;height:26.4px;background:#d3def9;"></div>
<div style="left:1326.1px;top:1449.99px;width:26.52px;height:26.4px;background:#dde5fa;"></div>
<div style="left:1038.93px;top:1478.82px;width:26.52px;height:26.4px;background:#dbe4fa;"></div>
<div style="left:1067.65px;top:1478.82px;width:26.52px;height:26.4px;background:#b3c6f5;"></div>
<div style="left:1096.37px;top:1478.82px;width:26.52px;height:26.4px;background:#a5bcf3;"></div>
<div style="left:1125.08px;top:1478.82px;width:26.52px;height:26.4px;background:#c6d4f7;"></div>
<div style="left:1153.8px;top:1478.82px;width:26.52px;height:26.4px;background:#cdd9f8;"></div>
<div style="left:1182.52px;top:1478.82px;width:26.52px;height:26.4px;background:#d5dffa;"></div>
<div style="left:1211.23px;top:1478.82px;width:26.52px;height:26.4px;background:#e0e7fb;"></div>
<div style="left:1239.95px;top:1478.82px;width:26.52px;height:26.4px;background:#e6ecfc;"></div>
<div style="left:1268.67px;top:1478.82px;width:26.52px;height:26.4px;background:#eef2fd;"></div>
<div style="left:1297.38px;top:1478.82px;width:26.52px;height:26.4px;background:#f0f4fd;"></div>
<div style="left:1326.1px;top:1478.82px;width:26.52px;height:26.4px;background:#f2f5fd;"></div>
<div style="left:1038.93px;top:1507.65px;width:26.52px;height:26.4px;background:#e1e8fb;"></div>
<div style="left:1067.65px;top:1507.65px;width:26.52px;height:26.4px;background:#dbe4fa;"></div>
<div style="left:1096.37px;top:1507.65px;width:26.52px;height:26.4px;background:#eef2fd;"></div>
<div style="left:1125.08px;top:1507.65px;width:26.52px;height:26.4px;background:#f3f6fe;"></div>
<div style="left:1153.8px;top:1507.65px;width:26.52px;height:26.4px;background:#f3f6fe;"></div>
<div style="left:1182.52px;top:1507.65px;width:26.52px;height:26.4px;background:#f6f8fe;"></div>
<div style="left:1211.23px;top:1507.65px;width:26.52px;height:26.4px;background:#f8fafe;"></div>
<div style="left:1239.95px;top:1507.65px;width:26.52px;height:26.4px;background:#fafbff;"></div>
<div style="left:1268.67px;top:1507.65px;width:26.52px;height:26.4px;background:#fbfcff;"></div>
<div style="left:1297.38px;top:1507.65px;width:26.52px;height:26.4px;background:#fcfdff;"></div>
<div style="left:1326.1px;top:1507.65px;width:26.52px;height:26.4px;background:#fdfdff;"></div>
<div style="left:805.6px;top:1362.9px;width:1.3px;height:201px;background:#9e9e9e;"></div>
<div style="left:805.6px;top:1563.2px;width:692.6px;height:1.4px;background:#9e9e9e;"></div>
<div style="left:807.1px;top:1563.2px;width:1.4px;height:7px;background:#9e9e9e;"></div>
<div style="left:979.4px;top:1563.2px;width:1.4px;height:7px;background:#9e9e9e;"></div>
<div style="left:1151.7px;top:1563.2px;width:1.4px;height:7px;background:#9e9e9e;"></div>
<div style="left:1324px;top:1563.2px;width:1.4px;height:7px;background:#9e9e9e;"></div>
<div style="left:1496.3px;top:1563.2px;width:1.4px;height:7px;background:#9e9e9e;"></div>
<div class="t" style="top:1563.50px;height:40px;line-height:40px;font-size:20px;color:#5f6368;left:218.6px;width:1200px;text-align:center;"><span id="t67">00</span></div>
<div class="t" style="top:1563.50px;height:40px;line-height:40px;font-size:20px;color:#5f6368;left:385.57px;width:1200px;text-align:center;"><span id="t68">06</span></div>
<div class="t" style="top:1563.50px;height:40px;line-height:40px;font-size:20px;color:#5f6368;left:552.54px;width:1200px;text-align:center;"><span id="t69">12</span></div>
<div class="t" style="top:1563.50px;height:40px;line-height:40px;font-size:20px;color:#5f6368;left:719.51px;width:1200px;text-align:center;"><span id="t70">18</span></div>
<div class="t" style="top:1563.50px;height:40px;line-height:40px;font-size:20px;color:#5f6368;left:886.48px;width:1200px;text-align:center;"><span id="t71">00</span></div>
<div class="t" style="top:1360.07px;height:39px;line-height:39px;font-size:19.5px;color:#5f6368;left:188.7px;width:1200px;text-align:center;"><span id="t72">อา</span></div>
<div class="t" style="top:1388.07px;height:39px;line-height:39px;font-size:19.5px;color:#5f6368;left:188.7px;width:1200px;text-align:center;"><span id="t73">จ</span></div>
<div class="t" style="top:1416.77px;height:39px;line-height:39px;font-size:19.5px;color:#5f6368;left:188.7px;width:1200px;text-align:center;"><span id="t74">อ</span></div>
<div class="t" style="top:1445.27px;height:39px;line-height:39px;font-size:19.5px;color:#5f6368;left:188.7px;width:1200px;text-align:center;"><span id="t75">พ</span></div>
<div class="t" style="top:1474.27px;height:39px;line-height:39px;font-size:19.5px;color:#5f6368;left:188.7px;width:1200px;text-align:center;"><span id="t76">พฤ</span></div>
<div class="t" style="top:1502.67px;height:39px;line-height:39px;font-size:19.5px;color:#5f6368;left:188.7px;width:1200px;text-align:center;"><span id="t77">ศ</span></div>
<div class="t" style="top:1531.27px;height:39px;line-height:39px;font-size:19.5px;color:#5f6368;left:188.7px;width:1200px;text-align:center;"><span id="t78">ส</span></div>
<div class="t" style="top:1638.24px;height:43px;line-height:43px;font-size:21.74px;color:#2f61cb;font-weight:500;left:786.8px;"><span id="t79">ช่วงเวลาที่โฆษณาทำงาน</span></div>
<svg style="left:1592px;top:1124px;" width="30" height="28" viewBox="1592 1124 30 28"><circle cx="1601" cy="1134.6" r="4.6" fill="#5f6368"/><path d="M1593.6 1149.2v-2.4c0-3.6 4.6-5.4 7.4-5.4s7.4 1.8 7.4 5.4v2.4z" fill="#5f6368"/><rect x="1608.4" y="1128.2" width="12.4" height="2.4" fill="#5f6368"/><rect x="1609.6" y="1133.6" width="11.2" height="2.4" fill="#5f6368"/><rect x="1611.4" y="1139" width="9.4" height="2.4" fill="#5f6368"/></svg>
<div class="t" style="top:1117.25px;height:41px;line-height:41px;font-size:20.48px;color:#3c4043;left:1636px;"><span id="t80">ข้อมูลประชากร</span></div>
<div class="t" style="top:1116.26px;height:39px;line-height:39px;font-size:19.66px;color:#3c4043;left:2106px;"><span id="t81">การแสดงผล</span></div>
<svg style="left:2202.3px;top:1116.8px;" width="38" height="38" viewBox="0 0 24 24"><path d="M7 10l5 5 5-5z" fill="#5f6368"/></svg>
<div style="left:2106px;top:1148.5px;width:130px;height:1.4px;background:#dadce0;"></div>
<svg style="left:2273.3px;top:1118px;" width="40" height="40" viewBox="0 0 24 24"><path d="M12 8c1.1 0 2-.9 2-2s-.9-2-2-2-2 .9-2 2 .9 2 2 2zm0 2c-1.1 0-2 .9-2 2s.9 2 2 2 2-.9 2-2-.9-2-2-2zm0 6c-1.1 0-2 .9-2 2s.9 2 2 2 2-.9 2-2-.9-2-2-2z" fill="#5f6368"/></svg>
<div class="t" style="top:1197.73px;height:44px;line-height:44px;font-size:22.22px;color:#202124;font-weight:500;left:1592px;"><span id="t82">ข้อมูลสรุปกลุ่มประชากรที่โฆษณาของคุณเข้าถึง แบ่งตามอายุและเพศ</span></div>
<div class="t" style="top:1275.82px;height:47px;line-height:47px;font-size:23.5px;color:#5f6368;left:1095.8px;width:1200px;text-align:center;"><span id="t83">เพศ</span></div>
<div class="t" style="top:1277.84px;height:43px;line-height:43px;font-size:21.74px;color:#202124;font-weight:500;left:1901.7px;"><span id="t84">เพศและอายุ</span></div>
<div class="t" style="top:1278.35px;height:42px;line-height:42px;font-size:20.77px;color:#5f6368;left:2199.4px;"><span id="t85">อายุ</span></div>
<div style="left:1826.3px;top:1333.6px;width:260.4px;height:3.2px;background:#3a6fd8;"></div>
<div style="left:1713.9px;top:1363.9px;width:80.8px;height:80.6px;background:#dbe5fb;"></div>
<div style="left:1797.3px;top:1363.9px;width:80.8px;height:80.6px;background:#84a5ee;"></div>
<div style="left:1880.4px;top:1363.9px;width:80.8px;height:80.6px;background:#b6c9f6;"></div>
<div style="left:1963.5px;top:1363.9px;width:80.8px;height:80.6px;background:#d0dcf9;"></div>
<div style="left:2047.2px;top:1363.9px;width:80.8px;height:80.6px;background:#dfe7fb;"></div>
<div style="left:2130.3px;top:1363.9px;width:80.8px;height:80.6px;background:#eef1fd;"></div>
<div style="left:1713.9px;top:1447.3px;width:80.8px;height:80.6px;background:#c0d1f8;"></div>
<div style="left:1797.3px;top:1447.3px;width:80.8px;height:80.6px;background:#4f7de6;"></div>
<div style="left:1880.4px;top:1447.3px;width:80.8px;height:80.6px;background:#7396ec;"></div>
<div style="left:1963.5px;top:1447.3px;width:80.8px;height:80.6px;background:#b0c5f5;"></div>
<div style="left:2047.2px;top:1447.3px;width:80.8px;height:80.6px;background:#d3defa;"></div>
<div style="left:2130.3px;top:1447.3px;width:80.8px;height:80.6px;background:#f3f5fe;"></div>
<div style="left:1711.8px;top:1363px;width:1.2px;height:165.6px;background:#80868b;"></div>
<div class="t" style="top:1393.54px;height:44px;line-height:44px;font-size:22px;color:#5f6368;left:1652.5px;"><span id="t86">ชาย</span></div>
<div class="t" style="top:1460.17px;height:38px;line-height:38px;font-size:18.9px;color:#5f6368;left:1651.2px;"><span id="t87">หญิง</span></div>
<div class="t" style="top:1523.46px;height:40px;line-height:40px;font-size:20px;color:#5f6368;left:1154.2px;width:1200px;text-align:center;"><span id="t88">18-24 ปี</span></div>
<div class="t" style="top:1523.46px;height:40px;line-height:40px;font-size:20px;color:#5f6368;left:1237.4px;width:1200px;text-align:center;"><span id="t89">25-34 ปี</span></div>
<div class="t" style="top:1523.46px;height:40px;line-height:40px;font-size:20px;color:#5f6368;left:1320.5px;width:1200px;text-align:center;"><span id="t90">35-44 ปี</span></div>
<div class="t" style="top:1523.46px;height:40px;line-height:40px;font-size:20px;color:#5f6368;left:1403.6px;width:1200px;text-align:center;"><span id="t91">45-54 ปี</span></div>
<div class="t" style="top:1523.46px;height:40px;line-height:40px;font-size:20px;color:#5f6368;left:1487.3px;width:1200px;text-align:center;"><span id="t92">55-64 ปี</span></div>
<div class="t" style="top:1523.46px;height:40px;line-height:40px;font-size:20px;color:#5f6368;left:1570px;width:1200px;text-align:center;"><span id="t93">65 ขึ้นไป</span></div>
<div class="t" style="top:1577.05px;height:41px;line-height:41px;font-size:20.72px;color:#5f6368;left:1592px;"><span id="t94">อิงตามจำนวนการแสดงผล 80% ที่ทราบเพศและอายุ</span></div>
<svg style="left:2030.4px;top:1583px;" width="26" height="26" viewBox="0 0 24 24"><path d="M11 18h2v-2h-2v2zm1-16C6.48 2 2 6.48 2 12s4.48 10 10 10 10-4.48 10-10S17.52 2 12 2zm0 18c-4.41 0-8-3.59-8-8s3.59-8 8-8 8 3.59 8 8-3.59 8-8 8zm0-14c-2.21 0-4 1.79-4 4h2c0-1.1.9-2 2-2s2 .9 2 2c0 2-3 1.75-3 5h2c0-2.25 3-2.5 3-5 0-2.21-1.79-4-4-4z" fill="#5f6368"/></svg>
<div class="t" style="top:1628.14px;height:44px;line-height:44px;font-size:21.91px;color:#2f61cb;font-weight:500;left:1593px;"><span id="t95">ข้อมูลประชากร</span></div>
<svg style="left:2398.3px;top:1123.2px;" width="29" height="29" viewBox="0 0 24 24"><path d="M4 6h18V4H4c-1.1 0-2 .9-2 2v11H0v3h14v-3H4V6zm19 2h-6c-.55 0-1 .45-1 1v10c0 .55.45 1 1 1h6c.55 0 1-.45 1-1V9c0-.55-.45-1-1-1zm-1 9h-4v-7h4v7z" fill="#5f6368"/></svg>
<div class="t" style="top:1118.27px;height:39px;line-height:39px;font-size:19.39px;color:#3c4043;left:2442px;"><span id="t96">อุปกรณ์</span></div>
<svg style="left:3079.5px;top:1118px;" width="40" height="40" viewBox="0 0 24 24"><path d="M12 8c1.1 0 2-.9 2-2s-.9-2-2-2-2 .9-2 2 .9 2 2 2zm0 2c-1.1 0-2 .9-2 2s.9 2 2 2 2-.9 2-2-.9-2-2-2zm0 6c-1.1 0-2 .9-2 2s.9 2 2 2 2-.9 2-2-.9-2-2-2z" fill="#5f6368"/></svg>
<div class="t" style="top:1197.23px;height:45px;line-height:45px;font-size:22.3px;color:#202124;font-weight:500;left:2398px;"><span id="t97">ประสิทธิภาพโฆษณาในอุปกรณ์ต่างๆ</span></div>
<svg style="left:2404px;top:1266px;" width="26" height="40" viewBox="2404 1266 26 40"><rect x="2407.3" y="1270.2" width="18.8" height="30.8" rx="2.6" fill="none" stroke="#5080e8" stroke-width="3.6"/><rect x="2407.3" y="1270" width="18.8" height="4.2" fill="#5080e8"/><rect x="2407.3" y="1297" width="18.8" height="4.2" fill="#5080e8"/></svg>
<div class="t" style="top:1265.55px;height:41px;line-height:41px;font-size:20.5px;color:#5f6368;left:2450.7px;"><span id="t98">โทรศัพท์เคลื่อนที่</span></div>
<svg style="left:2618px;top:1270px;" width="40" height="32" viewBox="2618 1270 40 32"><rect x="2620" y="1273.2" width="34.8" height="25.2" rx="3.4" fill="#cc4b3c"/><rect x="2626" y="1276.6" width="22.6" height="18.4" fill="#fff"/></svg>
<div class="t" style="top:1266.06px;height:40px;line-height:40px;font-size:20.02px;color:#5f6368;left:2669.7px;"><span id="t99">แท็บเล็ต</span></div>
<svg style="left:2763px;top:1270px;" width="44" height="32" viewBox="2763 1270 44 32"><rect x="2771" y="1275" width="26.6" height="18" rx="1.6" fill="none" stroke="#efb63c" stroke-width="3.4"/><rect x="2765.2" y="1294.6" width="38.2" height="3.6" rx="1.2" fill="#efb63c"/></svg>
<div class="t" style="top:1265.55px;height:41px;line-height:41px;font-size:20.44px;color:#5f6368;left:2817.4px;"><span id="t100">คอมพิวเตอร์</span></div>
<div style="left:2399.2px;top:1350px;width:418.5px;height:37.8px;background:#5080e8;"></div>
<div style="left:2820px;top:1350px;width:8.6px;height:37.8px;background:#cc4b3c;"></div>
<div style="left:2830.5px;top:1350px;width:127.3px;height:37.8px;background:#efb63c;"></div>
<div style="left:2398px;top:1400.7px;width:12.6px;height:12.6px;background:#5080e8;"></div>
<div style="left:2643.2px;top:1400.7px;width:12.6px;height:12.6px;background:#cc4b3c;"></div>
<div style="left:2875.8px;top:1400.7px;width:12.6px;height:12.6px;background:#efb63c;"></div>
<div class="t" style="top:1387.50px;height:39px;line-height:39px;font-size:19.3px;color:#5f6368;left:2423.7px;"><span id="t101">76.7%</span></div>
<div class="t" style="top:1388.00px;height:38px;line-height:38px;font-size:18.86px;color:#5f6368;left:2669.4px;"><span id="t102">1.1%</span></div>
<div class="t" style="top:1387.50px;height:39px;line-height:39px;font-size:19.48px;color:#5f6368;left:1757.5px;width:1200px;text-align:right;"><span id="t103">22.2%</span></div>
<div style="left:2399.2px;top:1439.8px;width:451.6px;height:37.9px;background:#5080e8;"></div>
<div style="left:2853px;top:1439.8px;width:14.7px;height:37.9px;background:#cc4b3c;"></div>
<div style="left:2869.6px;top:1439.8px;width:88.2px;height:37.9px;background:#efb63c;"></div>
<div style="left:2398px;top:1489.9px;width:12.6px;height:12.6px;background:#5080e8;"></div>
<div style="left:2643.2px;top:1489.9px;width:12.6px;height:12.6px;background:#cc4b3c;"></div>
<div style="left:2875.8px;top:1489.9px;width:12.6px;height:12.6px;background:#efb63c;"></div>
<div class="t" style="top:1476.70px;height:39px;line-height:39px;font-size:19.3px;color:#5f6368;left:2423.7px;"><span id="t104">83.1%</span></div>
<div class="t" style="top:1477.20px;height:38px;line-height:38px;font-size:18.86px;color:#5f6368;left:2669.4px;"><span id="t105">2.1%</span></div>
<div class="t" style="top:1476.70px;height:39px;line-height:39px;font-size:19.48px;color:#5f6368;left:1757.5px;width:1200px;text-align:right;"><span id="t106">14.8%</span></div>
<div style="left:2399.2px;top:1529px;width:418.5px;height:38.5px;background:#5080e8;"></div>
<div style="left:2820px;top:1529px;width:8.6px;height:38.5px;background:#cc4b3c;"></div>
<div style="left:2830.5px;top:1529px;width:127.3px;height:38.5px;background:#efb63c;"></div>
<div style="left:2398px;top:1579.7px;width:12.6px;height:12.6px;background:#5080e8;"></div>
<div style="left:2643.2px;top:1579.7px;width:12.6px;height:12.6px;background:#cc4b3c;"></div>
<div style="left:2875.8px;top:1579.7px;width:12.6px;height:12.6px;background:#efb63c;"></div>
<div class="t" style="top:1566.50px;height:39px;line-height:39px;font-size:19.3px;color:#5f6368;left:2423.7px;"><span id="t107">76.7%</span></div>
<div class="t" style="top:1567.00px;height:38px;line-height:38px;font-size:18.86px;color:#5f6368;left:2669.4px;"><span id="t108">1.1%</span></div>
<div class="t" style="top:1566.50px;height:39px;line-height:39px;font-size:19.48px;color:#5f6368;left:1757.5px;width:1200px;text-align:right;"><span id="t109">22.2%</span></div>
<div class="t" style="top:1346.27px;height:38px;line-height:38px;font-size:18.8px;color:#3c4043;left:2990.3px;"><span id="t110">คลิก</span></div>
<svg style="left:3021.4px;top:1346.3px;" width="38" height="38" viewBox="0 0 24 24"><path d="M7 10l5 5 5-5z" fill="#5f6368"/></svg>
<div style="left:2990.3px;top:1379px;width:64.7px;height:1.4px;background:#dadce0;"></div>
<div class="t" style="top:1439.87px;height:39px;line-height:39px;font-size:19.48px;color:#3c4043;left:2990.3px;"><span id="t111">การแสดงผล</span></div>
<svg style="left:3086.3px;top:1440.4px;" width="38" height="38" viewBox="0 0 24 24"><path d="M7 10l5 5 5-5z" fill="#5f6368"/></svg>
<div style="left:2990.3px;top:1473px;width:129.7px;height:1.4px;background:#dadce0;"></div>
<div class="t" style="top:1534.27px;height:38px;line-height:38px;font-size:18.8px;color:#3c4043;left:2990.3px;"><span id="t112">คลิก</span></div>
<svg style="left:3021.4px;top:1534.3px;" width="38" height="38" viewBox="0 0 24 24"><path d="M7 10l5 5 5-5z" fill="#5f6368"/></svg>
<div style="left:2990.3px;top:1567px;width:64.7px;height:1.4px;background:#dadce0;"></div>
<div class="t" style="top:1607.55px;height:41px;line-height:41px;font-size:20.69px;color:#70757a;left:2398px;"><span id="t113">การปรับราคาเสนอ</span></div>
<div class="t" style="top:1634.33px;height:46px;line-height:46px;font-size:22.82px;color:#3c4043;left:2398px;"><span id="t114">โทรศัพท์เคลื่อนที่:</span></div>
<div class="t" style="top:1634.60px;height:46px;line-height:46px;font-size:23px;color:#3c4043;left:2569px;transform:scaleX(0.6696);transform-origin:0 50%;"><span id="t115">—</span></div>
<div class="t" style="top:1634.83px;height:45px;line-height:45px;font-size:22.33px;color:#3c4043;left:2639.5px;"><span id="t116">คอมพิวเตอร์:</span></div>
<div class="t" style="top:1634.60px;height:46px;line-height:46px;font-size:23px;color:#3c4043;left:2767.4px;transform:scaleX(0.6652);transform-origin:0 50%;"><span id="t117">—</span></div>
<div class="t" style="top:1635.34px;height:44px;line-height:44px;font-size:21.94px;color:#3c4043;left:2837.5px;"><span id="t118">แท็บเล็ต:</span></div>
<div class="t" style="top:1634.60px;height:46px;line-height:46px;font-size:23px;color:#3c4043;left:2928.2px;transform:scaleX(0.6522);transform-origin:0 50%;"><span id="t119">—</span></div>
<div class="t" style="top:1690.34px;height:44px;line-height:44px;font-size:21.88px;color:#2f61cb;font-weight:500;left:2402px;"><span id="t120">อุปกรณ์</span></div>
<svg style="left:0px;top:1728px;" width="16" height="16" viewBox="0 0 16 16"><path d="M0 0A16 16 0 0 0 16 16H0z" fill="#000"/></svg>
<svg style="left:3298px;top:1732px;" width="12" height="12" viewBox="0 0 12 12"><path d="M12 0A12 12 0 0 1 0 12H12z" fill="#111"/></svg>
</div>
<script>(function(){var w=window.innerWidth||3310;if(w>0&&w<3300){var s=w/3310,a=document.getElementById("app");a.style.transformOrigin="0 0";a.style.transform="scale("+s+")";var b=document.body.style;b.width=w+"px";b.height=Math.ceil(1744*s)+"px";b.overflow="hidden";document.documentElement.style.overflow="hidden";}})();</script>
</body></html>
